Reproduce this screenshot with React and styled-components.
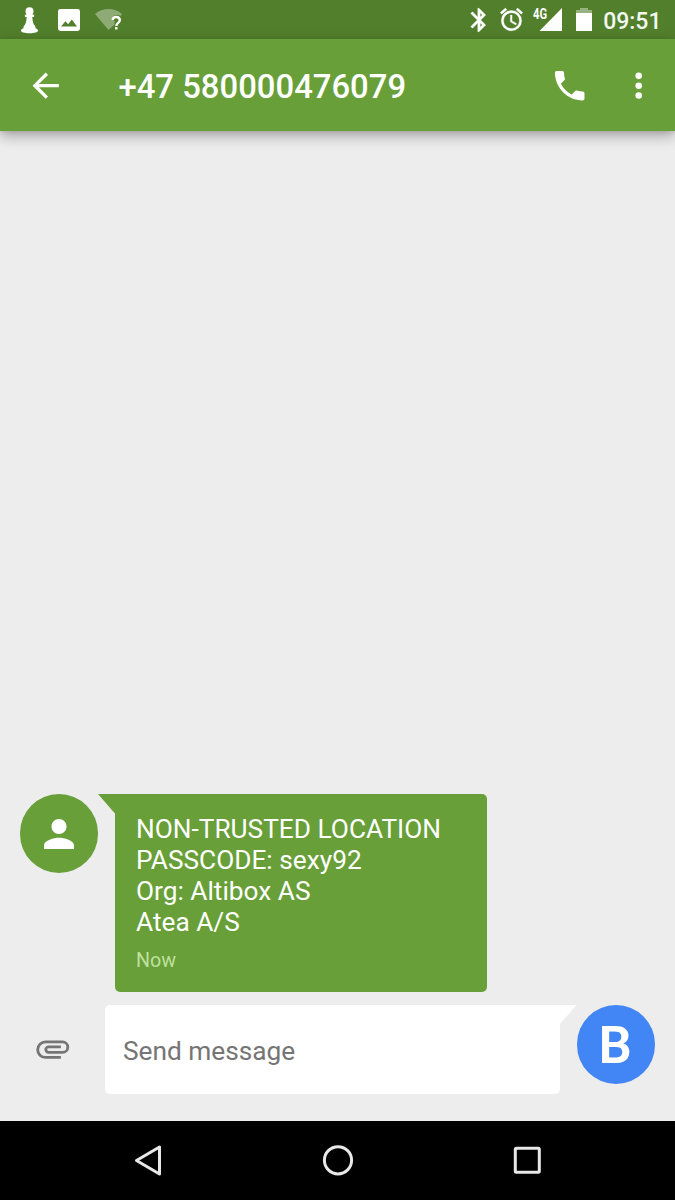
import React from "react";
import styled, { createGlobalStyle } from "styled-components";

const GlobalStyle = createGlobalStyle`
  * { box-sizing: border-box; }
  html, body { margin: 0; padding: 0; }
  body { font-family: Roboto, "Liberation Sans", sans-serif; background: #000; }
`;

const GREEN = "#689f38";
const ICON = 39.4;

const Screen = styled.div`
  width: 675px;
  height: 1200px;
  display: flex;
  flex-direction: column;
  overflow: hidden;
  background: #ededed;
`;

const StatusBar = styled.header`
  flex: none;
  height: 39.4px;
  padding: 0 13.5px 0 20px;
  display: flex;
  align-items: center;
  justify-content: space-between;
  background: #527f2c;
  color: #fff;
`;

const StatusGroup = styled.div`
  display: flex;
  align-items: center;
  height: 100%;
`;

const Glyph = styled.svg`
  display: block;
  flex: none;
  width: ${(p) => p.$w}px;
  height: ${(p) => p.$h ?? p.$w}px;
  margin-left: ${(p) => p.$gap ?? 0}px;
  fill: ${(p) => p.$color ?? "#fff"};
`;

const Network = styled.span`
  align-self: flex-start;
  margin: 7px 0 0 8px;
  width: 15px;
  font-size: 14px;
  line-height: 14px;
  font-weight: 700;
  transform: scaleX(0.8);
  transform-origin: left;
`;

const Clock = styled.time`
  margin: 4px 0 0 11.5px;
  font-size: 23px;
  line-height: 28px;
  font-weight: 500;
  color: #f3f7ef;
`;

const AppBar = styled.nav`
  flex: none;
  position: relative;
  height: 91.8px;
  padding: 0 16.4px 0 26.3px;
  display: flex;
  align-items: center;
  background: ${GREEN};
  box-shadow: 0 5px 13px rgba(0, 0, 0, 0.3), 0 1px 4px rgba(0, 0, 0, 0.1);
`;

const IconButton = styled.button`
  flex: none;
  display: flex;
  margin: 0 0 0 ${(p) => p.$gap ?? 0}px;
  padding: 0;
  border: 0;
  background: none;
`;

const Title = styled.h1`
  flex: 1;
  margin: 3px 0 0 52.8px;
  font-size: 32.85px;
  line-height: 40px;
  font-weight: 500;
  color: #fff;
  white-space: nowrap;
`;

const Thread = styled.main`
  flex: 1;
  display: flex;
  flex-direction: column;
  justify-content: flex-end;
  padding: 0 19.7px 26.8px;
`;

const Message = styled.article`
  display: flex;
  align-items: flex-start;
  margin-bottom: 13px;
`;

const Avatar = styled.div`
  flex: none;
  width: 78.8px;
  height: 78.8px;
  border-radius: 50%;
  display: flex;
  align-items: center;
  justify-content: center;
  background: ${(p) => p.$color};
  color: #fff;
  font-size: 52.5px;
  line-height: 78px;
`;

const Initial = styled.span`
  margin-right: 1.5px;
  font-weight: 600;
`;

const Tail = styled.svg`
  display: block;
  flex: none;
  width: 18.5px;
  height: 19px;
  margin: ${(p) => (p.$side === "left" ? "0 -2px 0 0" : "0 0 0 -2px")};
  fill: ${(p) => p.$color};
`;

const Bubble = styled.div`
  width: 372px;
  height: 197.8px;
  padding: 20px 21px;
  border-radius: 0 5px 5px 5px;
  background: ${GREEN};
  color: #fff;
`;

const Body = styled.p`
  margin: 0;
  font-size: 26.25px;
  line-height: 30.9px;
  white-space: pre-line;
`;

const Stamp = styled.p`
  margin: 11px 0 0;
  font-size: 19.7px;
  line-height: 24px;
  color: #bfe09f;
`;

const Composer = styled.form`
  display: flex;
  align-items: flex-start;
`;

const Attach = styled(IconButton)`
  margin: 23.3px 32.9px 0 13px;
`;

const Field = styled.div`
  flex: 1;
  height: 89.2px;
  padding: 2.600px 18px 0;
  display: flex;
  align-items: center;
  border-radius: 5px 0 5px 5px;
  background: #fff;
  color: #757575;
  font-size: 26.25px;
`;

const NavBar = styled.footer`
  flex: none;
  height: 78.8px;
  padding: 0 128px 1px;
  display: flex;
  align-items: center;
  justify-content: space-between;
  background: #000;
`;

export default function App() {
  return (
    <>
      <GlobalStyle />
      <Screen>
        <StatusBar>
          <StatusGroup>
            <Glyph $w={19} $h={28} viewBox="0 0 19 28">
              <circle cx="9.500" cy="5.300" r="4" />
              <rect x="4.800" y="8.500" width="9.400" height="2.500" rx="1" />
              <path d="M6.700 8h5.600c-.2 5 .4 9 2.600 12.300H4.100C6.300 17 6.900 13 6.700 8z" />
              <path d="M4.300 19.600h10.400c.7.800 1 1.800.8 2.600 1.700.5 2.500 1.500 2.500 2.600 0 1.400-3.500 2.500-8.500 2.500S1 26.200 1 24.800c0-1.100.8-2.100 2.500-2.600-.2-.8.1-1.800.8-2.600z" />
            </Glyph>
            <Glyph $w={22} $gap={19} viewBox="0 0 22 22">
              <path fillRule="evenodd" d="M2.400 0h17.200A2.400 2.400 0 0 1 22 2.400v17.200a2.400 2.400 0 0 1-2.400 2.400H2.400A2.400 2.400 0 0 1 0 19.600V2.400A2.400 2.400 0 0 1 2.400 0zM3 17.500h16l-5.200-6.900-3.700 4.700-2.600-3z" />
            </Glyph>
            <Glyph $w={30} $h={24} $gap={15} viewBox="0 0 30 24">
              <path opacity=".35" d="M0 6C7.500-.6 19.500-.6 27 6l-1.500 2c-4-2.500-9.500 0-9 4.500h3v4L13.500 22z" />
              <path fill="none" stroke="#fff" strokeWidth="2.400" d="M17.600 12.300c0-4.400 7.200-4.400 7.200 0 0 2.600-3.500 2.700-3.500 5.700M21.300 19v2.500" />
            </Glyph>
          </StatusGroup>
          <StatusGroup>
            <Glyph $w={28} viewBox="0 0 24 24">
              <path stroke="#fff" strokeWidth=".4" d="M17.710 7.710L12 2h-1v7.590L6.410 5 5 6.410 10.590 12 5 17.590 6.410 19 11 14.410V22h1l5.710-5.710-4.300-4.290 4.300-4.290zM13 5.830l1.880 1.880L13 9.590V5.830zm1.880 10.460L13 18.170v-3.760l1.880 1.880z" />
            </Glyph>
            <Glyph $w={27} $gap={5} viewBox="0 0 24 24">
              <path stroke="#fff" strokeWidth=".3" d="M22 5.720l-4.600-3.860-1.290 1.530 4.600 3.860L22 5.720zM7.880 3.390L6.600 1.860 2 5.710l1.290 1.530 4.590-3.850zM12.500 8H11v6l4.750 2.850.75-1.230-4-2.370V8zM12 4c-4.970 0-9 4.030-9 9s4.020 9 9 9a9 9 0 1 0 0-18zm0 16c-3.870 0-7-3.130-7-7s3.130-7 7-7 7 3.130 7 7-3.130 7-7 7z" />
            </Glyph>
            <Network>4G</Network>
            <Glyph $w={23} $h={23.5} $gap={-9} viewBox="0 0 23 23.500">
              <path d="M23 0v23.500H0z" />
            </Glyph>
            <Glyph $w={16} $h={23.5} $gap={13.5} viewBox="0 0 16 23.500">
              <path opacity=".4" d="M4 0h8v2h4v3H0V2h4z" />
              <path d="M0 5h16v18.500H0z" />
            </Glyph>
            <Clock>09:51</Clock>
          </StatusGroup>
        </StatusBar>

        <AppBar>
          <IconButton aria-label="Back">
            <Glyph $w={ICON} viewBox="0 0 24 24">
              <path d="M20 11H7.830l5.590-5.590L12 4l-8 8 8 8 1.410-1.410L7.830 13H20v-2z" />
            </Glyph>
          </IconButton>
          <Title>+47 580000476079</Title>
          <IconButton aria-label="Call">
            <Glyph $w={ICON} viewBox="0 0 24 24">
              <path d="M6.620 10.790c1.440 2.830 3.760 5.140 6.590 6.590l2.200-2.200c.27-.27.67-.36 1.020-.24 1.120.37 2.330.57 3.570.57.55 0 1 .45 1 1V20c0 .55-.45 1-1 1-9.390 0-17-7.610-17-17 0-.55.45-1 1-1h3.500c.55 0 1 .45 1 1 0 1.250.2 2.450.57 3.570.11.35.03.74-.25 1.020l-2.200 2.200z" />
            </Glyph>
          </IconButton>
          <IconButton aria-label="More options" $gap={29.6}>
            <Glyph $w={ICON} viewBox="0 0 24 24">
              <circle cx="12" cy="6" r="2" />
              <circle cx="12" cy="12" r="2" />
              <circle cx="12" cy="18" r="2" />
            </Glyph>
          </IconButton>
        </AppBar>

        <Thread>
          <Message>
            <Avatar $color={GREEN}>
              <Glyph $w={45} viewBox="0 0 24 24">
                <path d="M11.750 12.200c2.210 0 4-1.790 4-4s-1.790-4-4-4-4 1.790-4 4 1.790 4 4 4zm0 2c-2.670 0-8 1.340-8 4v2h16v-2c0-2.660-5.330-4-8-4z" />
              </Glyph>
            </Avatar>
            <Tail $side="left" $color={GREEN} viewBox="0 0 18.500 19">
              <path d="M0 0h18.500v19h-2z" />
            </Tail>
            <Bubble>
              <Body>{"NON-TRUSTED LOCATION\nPASSCODE: sexy92\nOrg: Altibox AS\nAtea A/S"}</Body>
              <Stamp>Now</Stamp>
            </Bubble>
          </Message>
          <Composer>
            <Attach type="button" aria-label="Attach">
              <Glyph $w={ICON} viewBox="0 0 24 24">
                <path fill="none" stroke="#757575" strokeWidth="1.700" d="M17 17.350H7.600a4.750 4.750 0 0 1 0-9.500H18a3.200 3.200 0 0 1 0 6.400H9.500a1.700 1.700 0 0 1 0-3.400H17" />
              </Glyph>
            </Attach>
            <Field>Send message</Field>
            <Tail $side="right" $color="#fff" viewBox="0 0 18.500 19">
              <path d="M0 0h18.500L2 19H0z" />
            </Tail>
            <Avatar $color="#4285f4">
              <Initial>B</Initial>
            </Avatar>
          </Composer>
        </Thread>

        <NavBar>
          <Glyph $w={40} viewBox="0 0 40 40">
            <path fill="none" stroke="#e8e8e8" strokeWidth="3" strokeLinejoin="round" d="M8.500 20.500L31.500 7v27z" />
          </Glyph>
          <Glyph $w={40} viewBox="0 0 40 40">
            <circle cx="20" cy="20.300" r="13.600" fill="none" stroke="#e8e8e8" strokeWidth="3" />
          </Glyph>
          <Glyph $w={40} viewBox="0 0 40 40">
            <rect x="8.300" y="8.300" width="24" height="24" rx="1" fill="none" stroke="#e8e8e8" strokeWidth="3" />
          </Glyph>
        </NavBar>
      </Screen>
    </>
  );
}
